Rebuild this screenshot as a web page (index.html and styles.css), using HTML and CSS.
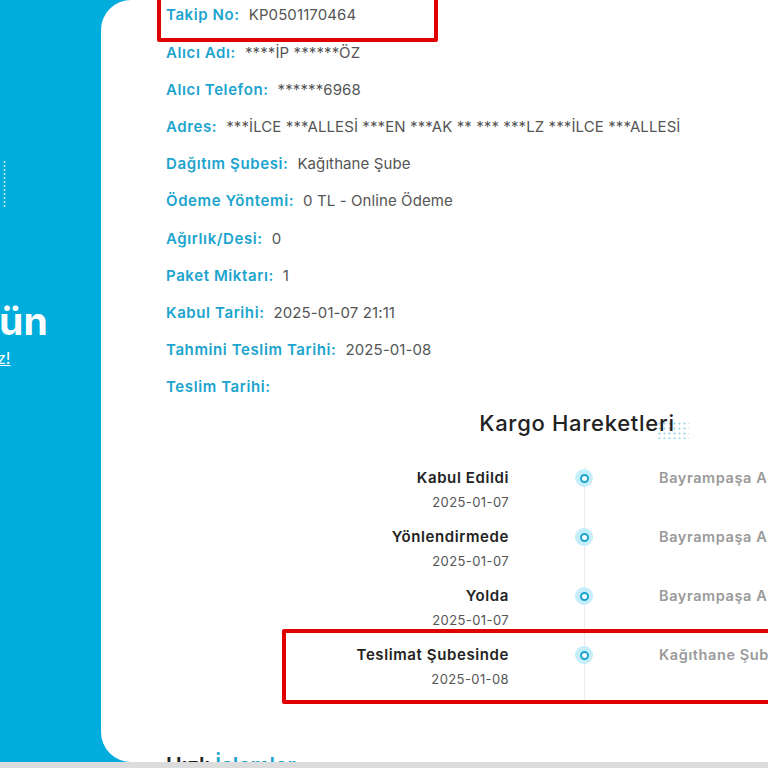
FILE: index.html
```html
<!DOCTYPE html>
<html lang="tr">
<head>
<meta charset="utf-8">
<title>Kargo Takip</title>
<link rel="stylesheet" href="styles.css">
</head>
<body>
<div class="page">
  <aside class="side">
    <div class="side-dots"></div>
    <div class="side-title">ün</div>
    <a class="side-link" href="#">z!</a>
  </aside>
  <main class="card">
    <div class="mark mark-top"></div>
    <div class="mark mark-bottom"></div>
    <ul class="details">
      <li><span class="lbl">Takip No:</span><span class="val">KP0501170464</span></li>
      <li><span class="lbl">Alıcı Adı:</span><span class="val">****İP ******ÖZ</span></li>
      <li><span class="lbl">Alıcı Telefon:</span><span class="val">******6968</span></li>
      <li><span class="lbl">Adres:</span><span class="val">***İLCE ***ALLESİ ***EN ***AK ** *** ***LZ ***İLCE ***ALLESİ</span></li>
      <li><span class="lbl">Dağıtım Şubesi:</span><span class="val">Kağıthane Şube</span></li>
      <li><span class="lbl">Ödeme Yöntemi:</span><span class="val">0 TL - Online Ödeme</span></li>
      <li><span class="lbl">Ağırlık/Desi:</span><span class="val">0</span></li>
      <li><span class="lbl">Paket Miktarı:</span><span class="val">1</span></li>
      <li><span class="lbl">Kabul Tarihi:</span><span class="val">2025-01-07 21:11</span></li>
      <li><span class="lbl">Tahmini Teslim Tarihi:</span><span class="val">2025-01-08</span></li>
      <li><span class="lbl">Teslim Tarihi:</span><span class="val"></span></li>
    </ul>
    <h2 class="section-title"><span class="deco">Kargo Hareketleri</span></h2>
    <div class="timeline">
      <div class="tl-row">
        <div class="tl-left"><div class="tl-status">Kabul Edildi</div><div class="tl-date">2025-01-07</div></div>
        <div class="tl-mid"><span class="tl-dot"></span></div>
        <div class="tl-right">Bayrampaşa Aktarma Merkezi</div>
      </div>
      <div class="tl-row">
        <div class="tl-left"><div class="tl-status">Yönlendirmede</div><div class="tl-date">2025-01-07</div></div>
        <div class="tl-mid"><span class="tl-dot"></span></div>
        <div class="tl-right">Bayrampaşa Aktarma Merkezi</div>
      </div>
      <div class="tl-row">
        <div class="tl-left"><div class="tl-status">Yolda</div><div class="tl-date">2025-01-07</div></div>
        <div class="tl-mid"><span class="tl-dot"></span></div>
        <div class="tl-right">Bayrampaşa Aktarma Merkezi</div>
      </div>
      <div class="tl-row">
        <div class="tl-left"><div class="tl-status">Teslimat Şubesinde</div><div class="tl-date">2025-01-08</div></div>
        <div class="tl-mid"><span class="tl-dot"></span></div>
        <div class="tl-right">Kağıthane Şube</div>
      </div>
    </div>
    <h2 class="quick-title">Hızlı <span class="accent">İşlemler</span></h2>
  </main>
</div>
<div class="hscroll"></div>
</body>
</html>
```
FILE: styles.css
```css
html, body {
  margin: 0;
  padding: 0;
  width: 768px;
  height: 768px;
  overflow: hidden;
  background: #00addc;
  font-family: "Inter", "Liberation Sans", sans-serif;
}

.page {
  display: flex;
  height: 762px;
  background: #00addc;
}

.side {
  position: relative;
  width: 101px;
  flex: none;
  overflow: hidden;
  color: #fff;
}

.side-dots {
  position: absolute;
  left: 3px;
  top: 160px;
  width: 3px;
  height: 48px;
  background-image: radial-gradient(circle, rgba(255,255,255,0.75) 0.9px, transparent 1.2px);
  background-size: 3px 4px;
}

.side-title {
  margin-top: 296px;
  font-size: 39px;
  font-weight: 700;
  line-height: 50px;
  margin-left: -1px;
  letter-spacing: 0.3px;
}

.side-link {
  display: block;
  margin-top: 2px;
  margin-left: -3px;
  color: #fff;
  font-size: 16px;
  line-height: 20px;
  text-decoration: underline;
}

.card {
  position: relative;
  width: 900px;
  flex: none;
  height: 762px;
  background: #fff;
  border-radius: 30px 0 0 30px;
  overflow: hidden;
  padding-left: 65px;
  box-sizing: border-box;
}

.mark {
  position: absolute;
  border: 4px solid #e10000;
  border-radius: 2px;
  z-index: 2;
}

.mark-top {
  left: 56px;
  top: -12px;
  width: 273px;
  height: 46px;
}

.mark-bottom {
  left: 181px;
  top: 629px;
  width: 700px;
  height: 67px;
}

.details {
  list-style: none;
  margin: -3.6px 0 0;
  padding: 0;
}

.details li {
  display: flex;
  gap: 9px;
  height: 37.2px;
  line-height: 37.2px;
  font-size: 15px;
  white-space: nowrap;
}

.lbl {
  color: #1ba4cd;
  font-weight: 600;
  letter-spacing: 0.6px;
}

.val {
  color: #555;
  font-weight: 400;
  letter-spacing: 0.1px;
}

.section-title {
  position: relative;
  z-index: 0;
  width: 822px;
  margin: 3px 0 0;
  text-align: center;
  font-size: 22px;
  font-weight: 500;
  line-height: 30px;
  color: #222;
  letter-spacing: 0.7px;
}

.deco {
  position: relative;
}

.deco::after {
  content: "";
  position: absolute;
  right: -14px;
  top: 11px;
  width: 32px;
  height: 18px;
  background-image: radial-gradient(circle, #a9dbec 0.9px, transparent 1.3px);
  background-size: 5px 5px;
  z-index: -1;
}

.timeline {
  margin-top: 29px;
}

.tl-row {
  display: grid;
  grid-template-columns: 343px 150px 1fr;
  height: 59px;
}

.tl-left {
  text-align: right;
}

.tl-status {
  font-size: 15px;
  font-weight: 600;
  color: #222;
  line-height: 22px;
  letter-spacing: 0.6px;
}

.tl-date {
  font-size: 13px;
  color: #555;
  line-height: 20px;
  margin-top: 3px;
  letter-spacing: 0.4px;
}

.tl-mid {
  position: relative;
  display: flex;
  justify-content: center;
}

.tl-mid::before {
  content: "";
  position: absolute;
  left: 74.5px;
  top: 0;
  bottom: 0;
  width: 1px;
  background: #ececec;
}

.tl-dot {
  position: relative;
  margin-top: 2px;
  width: 18px;
  height: 18px;
  border-radius: 50%;
  background: #c4eef9;
  display: flex;
  align-items: center;
  justify-content: center;
}

.tl-dot::after {
  content: "";
  width: 5px;
  height: 5px;
  border: 2.5px solid #1ba4cd;
  border-radius: 50%;
  background: #fff;
}

.tl-right {
  font-size: 14.5px;
  font-weight: 600;
  color: #9a9a9a;
  line-height: 22px;
  white-space: nowrap;
  letter-spacing: 0.6px;
}

.quick-title {
  margin: 48px 0 0;
  font-size: 21px;
  font-weight: 600;
  line-height: 30px;
  color: #222;
}

.accent {
  color: #1ba4cd;
}

.hscroll {
  height: 6px;
  background: #dcdcdc;
}
```
